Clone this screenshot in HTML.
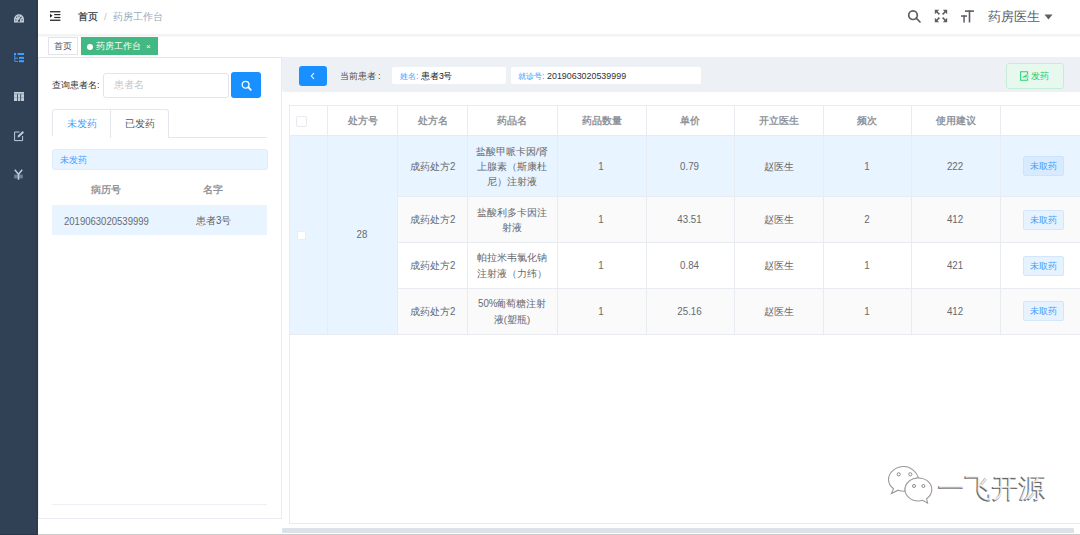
<!DOCTYPE html>
<html><head><meta charset="utf-8">
<style>
*{box-sizing:border-box;margin:0;padding:0}
html,body{width:1080px;height:535px;overflow:hidden;background:#fff;font-family:"Liberation Sans",sans-serif;color:#606266}
.a{position:absolute}
.t{position:absolute;white-space:nowrap;line-height:1}
#side{left:0;top:0;width:38px;height:535px;background:#304156}
#nav{left:38px;top:0;width:1042px;height:34px;background:#fff}
#tags{left:38px;top:34px;width:1042px;height:24px;background:#fff;border-bottom:1px solid #e3e6eb}
.tag{position:absolute;top:37px;height:18px;border:1px solid #e1e4ea;background:#fff;color:#495060;font-size:8.5px;line-height:16px}
.card{position:absolute;border:1px solid #e9ecf2;background:#fff;border-radius:1px}
.cell{position:absolute;display:flex;align-items:center;justify-content:center;text-align:center;font-size:9.6px;line-height:15.2px;color:#66696e}
.th{color:#909399;font-weight:bold}
.vl{position:absolute;width:1px;background:#e8ecf1}
.hl{position:absolute;height:1px;background:#e8ecf1}
.n{font-style:normal;font-size:10.8px;display:inline-block;transform:scaleX(.9)}
.nl{font-style:normal;font-size:10.8px;display:inline-block;transform:scaleX(.9);transform-origin:0 50%}
.btn{position:absolute;left:1023px;width:41px;height:20px;border:1px solid #d3e7fc;background:#e6f2fe;color:#409eff;border-radius:2px;font-size:8.6px;line-height:18px;text-align:center}
</style></head><body>

<!-- sidebar -->
<div id="side" class="a">
  <!-- dashboard -->
  <svg class="a" style="left:13px;top:12px" width="12" height="12" viewBox="0 0 12 12">
    <path d="M1 10.6 V7.2 A5 5 0 0 1 11 7.2 V10.6 Z" fill="#bfcbd9"/>
    <circle cx="6" cy="8.8" r="1.1" fill="#304156"/>
    <path d="M6 8.8 L7.9 5" stroke="#304156" stroke-width=".9"/>
    <circle cx="2.9" cy="8" r=".65" fill="#304156"/><circle cx="9.1" cy="8" r=".65" fill="#304156"/>
    <circle cx="3.8" cy="5.2" r=".65" fill="#304156"/><circle cx="6" cy="4.2" r=".6" fill="#304156"/><circle cx="8.3" cy="5.2" r=".5" fill="#304156"/>
  </svg>
  <!-- tree/list (active) -->
  <svg class="a" style="left:13px;top:52px" width="12" height="11" viewBox="0 0 12 11">
    <rect x="1" y="1" width="2" height="2" fill="#409eff"/>
    <path d="M1.8 3 V9.4 H5" stroke="#409eff" stroke-width=".9" fill="none"/>
    <path d="M1.8 6.2 H5" stroke="#409eff" stroke-width=".9"/>
    <rect x="4.5" y="1" width="6.5" height="2" fill="#409eff"/>
    <rect x="6" y="4.9" width="5" height="2" fill="#409eff"/>
    <rect x="6" y="8.2" width="5" height="2" fill="#409eff"/>
  </svg>
  <!-- table -->
  <svg class="a" style="left:13px;top:91px" width="12" height="11" viewBox="0 0 12 11">
    <rect x="1" y="1" width="10" height="9" fill="#bfcbd9"/>
    <rect x="1" y="2.6" width="10" height=".6" fill="#304156" opacity=".5"/>
    <rect x="4" y="3" width=".8" height="7" fill="#304156"/>
    <rect x="7.3" y="3" width=".8" height="7" fill="#304156"/>
    <rect x="1" y="6.2" width="10" height=".5" fill="#304156" opacity=".4"/>
  </svg>
  <!-- edit -->
  <svg class="a" style="left:13px;top:129px" width="12" height="13" viewBox="0 0 12 13">
    <path d="M6.5 3 H1.6 V11.6 H9.6 V7" stroke="#bfcbd9" stroke-width="1" fill="none"/>
    <path d="M4.6 8.6 L5 6.6 L9.6 2 L11 3.4 L6.4 8 Z" fill="#bfcbd9"/>
  </svg>
  <!-- yen -->
  <svg class="a" style="left:13px;top:168px" width="12" height="13" viewBox="0 0 12 13">
    <rect x="1.2" y="6.6" width="8.6" height="3.8" fill="#bfcbd9" opacity=".45"/>
    <path d="M1.8 1.8 L5.5 6.3 L9.2 1.8" stroke="#bfcbd9" stroke-width="1.5" fill="none"/>
    <path d="M5.5 6.3 V11.8" stroke="#bfcbd9" stroke-width="1.5"/>
  </svg>
</div>

<!-- navbar -->
<div id="nav" class="a"></div>
<svg class="a" style="left:49px;top:10px" width="13" height="12" viewBox="0 0 13 12">
  <rect x="1" y="1.1" width="10.4" height="1.3" fill="#262626"/>
  <rect x="5.2" y="4" width="6.2" height="1.2" fill="#262626"/>
  <rect x="5.2" y="6.9" width="6.2" height="1.2" fill="#262626"/>
  <rect x="1" y="9.6" width="10.4" height="1.3" fill="#262626"/>
  <path d="M1 3.8 L3.6 5.8 L1 7.8 Z" fill="#262626"/>
</svg>
<div class="t" style="left:78px;top:11.7px;font-size:9.7px;color:#303133;font-weight:normal;-webkit-text-stroke:.2px #303133">首页</div>
<div class="t" style="left:104px;top:11.7px;font-size:9.7px;color:#c0c4cc">/</div>
<div class="t" style="left:113px;top:11.7px;font-size:9.7px;color:#97a8be">药房工作台</div>

<svg class="a" style="left:906px;top:8px" width="16" height="16" viewBox="0 0 16 16">
  <circle cx="7" cy="7.2" r="4.3" stroke="#5a5e66" stroke-width="1.7" fill="none"/>
  <path d="M10.2 10.2 L14 14" stroke="#5a5e66" stroke-width="1.7" stroke-linecap="round"/>
</svg>
<svg class="a" style="left:933px;top:8px" width="16" height="16" viewBox="0 0 16 16">
  <g stroke="#5a5e66" stroke-width="1.6" fill="none">
    <path d="M3 3 L6.4 6.4"/><path d="M13 3 L9.6 6.4"/><path d="M3 13 L6.4 9.6"/><path d="M13 13 L9.6 9.6"/>
  </g>
  <g fill="#5a5e66">
    <path d="M1.8 1.8 H6.2 L1.8 6.2 Z"/><path d="M14.2 1.8 H9.8 L14.2 6.2 Z"/><path d="M1.8 14.2 H6.2 L1.8 9.8 Z"/><path d="M14.2 14.2 H9.8 L14.2 9.8 Z"/>
  </g>
</svg>
<svg class="a" style="left:960px;top:8px" width="16" height="16" viewBox="0 0 16 16">
  <g fill="#5a5e66">
    <rect x="5" y="2.3" width="9" height="1.6"/><rect x="8.7" y="2.3" width="1.6" height="12.2"/>
    <rect x="1" y="7.3" width="6" height="1.5"/><rect x="3.3" y="7.3" width="1.5" height="7.2"/>
  </g>
</svg>
<div class="t" style="left:988px;top:10.5px;font-size:12.8px;color:#5a5e66">药房医生</div>
<svg class="a" style="left:1044px;top:14px" width="9" height="6" viewBox="0 0 9 6"><path d="M0.5 0.5 H8.5 L4.5 5.5 Z" fill="#5a5e66"/></svg>

<!-- tags view -->
<div id="tags" class="a"></div>
<div class="a" style="left:38px;top:34px;width:1042px;height:2.5px;background:linear-gradient(#f5f6f6,#f1f3f3 50%,#fbfbfb)"></div>
<div class="tag" style="left:48px;width:30px;text-align:center">首页</div>
<div class="tag" style="left:81px;width:77px;background:#42b983;border-color:#42b983;color:#fff;padding-left:5px">
  <span style="display:inline-block;width:6px;height:6px;border-radius:50%;background:#fff;vertical-align:-0.5px;margin-right:3px"></span>药房工作台<span style="font-size:8px;margin-left:5px">×</span>
</div>


<!-- LEFT CARD -->
<div class="card" style="left:38px;top:57px;width:244px;height:462px;border-radius:0 2px 1px 0;border-top-color:#e3e6eb"></div>
<div class="t" style="left:52px;top:81px;font-size:8.9px;color:#303133;font-weight:500">查询患者名:</div>
<div class="a" style="left:103px;top:72.5px;width:126px;height:25.5px;border:1px solid #e2e5ea;border-radius:3px;background:#fff"></div>
<div class="t" style="left:114px;top:80px;font-size:9.66px;color:#c0c4cc">患者名</div>
<div class="a" style="left:231px;top:72px;width:30px;height:26px;background:#1890ff;border-radius:3px"></div>
<svg class="a" style="left:240px;top:79px" width="13" height="13" viewBox="0 0 13 13">
  <circle cx="5.6" cy="5.7" r="3.4" stroke="#fff" stroke-width="1.3" fill="none"/>
  <path d="M8.2 8.2 L10.8 10.8" stroke="#fff" stroke-width="1.8" stroke-linecap="round"/>
</svg>
<!-- tabs -->
<div class="hl" style="left:52px;top:137px;width:215px;background:#e4e7ed"></div>
<div class="a" style="left:52px;top:109px;width:117px;height:29px;border:1px solid #e4e7ed;border-bottom:none;border-radius:3px 3px 0 0;background:#fff"></div>
<div class="vl" style="left:110px;top:109px;height:29px;background:#e4e7ed"></div>
<div class="a" style="left:52px;top:136px;width:58px;height:2px;background:#fff"></div>
<div class="t" style="left:67px;top:119px;font-size:9.66px;color:#409eff">未发药</div>
<div class="t" style="left:125px;top:119px;font-size:9.66px;color:#55575c">已发药</div>
<!-- alert -->
<div class="a" style="left:52px;top:149px;width:216px;height:21px;background:#e8f4ff;border:1px solid #deedfc;border-radius:3px"></div>
<div class="t" style="left:59.5px;top:156px;font-size:8.6px;color:#409eff">未发药</div>
<!-- list table -->
<div class="t" style="left:91px;top:185px;font-size:9.66px;color:#909399;font-weight:bold">病历号</div>
<div class="t" style="left:203px;top:185px;font-size:9.66px;color:#909399;font-weight:bold">名字</div>
<div class="a" style="left:52px;top:205px;width:215px;height:30px;background:#e8f4ff"></div>
<div class="t" style="left:64px;top:212px;color:#696c71"><i class="nl" style="font-size:10.6px">2019063020539999</i></div>
<div class="t" style="left:196px;top:215px;font-size:9.66px;color:#606266">患者<i class="nl" style="margin-right:-.9px">3</i>号</div>
<div class="hl" style="left:52px;top:504px;width:215px;background:#edf0f4"></div>

<!-- RIGHT PANEL -->
<div class="a" style="left:282px;top:57px;width:798px;height:35px;background:#edf0f5;border-radius:0 0 0 3px"></div>
<div class="a" style="left:299px;top:66px;width:28px;height:20px;background:#1890ff;border-radius:3px"></div>
<svg class="a" style="left:309px;top:72px" width="8" height="8" viewBox="0 0 8 8"><path d="M5 1 L2.4 4 L5 7" stroke="#fff" stroke-width="1.1" fill="none"/></svg>
<div class="t" style="left:340px;top:71px;font-size:9.4px;color:#4a4c50">当前患者<span style="margin-left:2px">:</span></div>
<div class="a" style="left:392px;top:67px;width:114px;height:17px;background:#fff;border-radius:2px"></div>
<div class="t" style="left:400px;top:71px;font-size:8.3px;color:#409eff">姓名: <span style="color:#1a1a1a;font-size:8.7px">患者<i class="nl" style="font-size:9.6px;margin-right:-.8px">3</i>号</span></div>
<div class="a" style="left:511px;top:67px;width:190px;height:17px;background:#fff;border-radius:2px"></div>
<div class="t" style="left:518px;top:71px;font-size:8.3px;color:#409eff">就诊号: <i class="nl" style="color:#303133;font-size:9.9px">2019063020539999</i></div>
<div class="a" style="left:1006px;top:63px;width:58px;height:26px;background:#e7f9ef;border:1px solid #c2efd6;border-radius:3px"></div>
<svg class="a" style="left:1019px;top:70px" width="12" height="12" viewBox="0 0 12 12">
  <path d="M8.6 4.2 V1.8 H1.6 V10.3 H8.6 V8.6" stroke="#2fd37a" stroke-width="1.1" fill="none"/>
  <circle cx="7.6" cy="6.4" r="2.3" fill="#13ce66" opacity=".35"/>
  <path d="M3.6 7.4 L7.8 5.6" stroke="#13ce66" stroke-width="1" fill="none"/>
</svg>
<div class="t" style="left:1030.5px;top:72px;font-size:9.1px;color:#13ce66">发药</div>

<!-- table backgrounds -->
<div class="a" style="left:289px;top:136px;width:791px;height:61px;background:#e8f4ff"></div>
<div class="a" style="left:289px;top:197px;width:109px;height:137px;background:#e8f4ff"></div>
<div class="a" style="left:398px;top:197px;width:682px;height:46px;background:#fafafa"></div>
<div class="a" style="left:398px;top:288px;width:682px;height:46px;background:#fafafa"></div>
<!-- outer border -->
<div class="a" style="left:289px;top:105px;width:800px;height:419px;border:1px solid #e8ecf1"></div>
<!-- horizontal lines -->
<div class="hl" style="left:289px;top:135px;width:791px"></div>
<div class="hl" style="left:398px;top:196px;width:682px"></div>
<div class="hl" style="left:398px;top:242px;width:682px"></div>
<div class="hl" style="left:398px;top:288px;width:682px"></div>
<div class="hl" style="left:289px;top:334px;width:791px"></div>
<!-- vertical lines -->
<div class="vl" style="left:327px;top:105px;height:229px"></div>
<div class="vl" style="left:397px;top:105px;height:229px"></div>
<div class="vl" style="left:467px;top:105px;height:229px"></div>
<div class="vl" style="left:557px;top:105px;height:229px"></div>
<div class="vl" style="left:646px;top:105px;height:229px"></div>
<div class="vl" style="left:734px;top:105px;height:229px"></div>
<div class="vl" style="left:823px;top:105px;height:229px"></div>
<div class="vl" style="left:911px;top:105px;height:229px"></div>
<div class="vl" style="left:1000px;top:105px;height:229px"></div>

<!-- header -->
<div class="a" style="left:296px;top:116px;width:11px;height:11px;border:1px solid #e6e9ee;border-radius:2px;background:#fff"></div>
<div class="cell th" style="left:327px;top:105px;width:71px;height:31px"><div>处方号</div></div>
<div class="cell th" style="left:398px;top:105px;width:69px;height:31px"><div>处方名</div></div>
<div class="cell th" style="left:467px;top:105px;width:90px;height:31px"><div>药品名</div></div>
<div class="cell th" style="left:557px;top:105px;width:89px;height:31px"><div>药品数量</div></div>
<div class="cell th" style="left:646px;top:105px;width:88px;height:31px"><div>单价</div></div>
<div class="cell th" style="left:734px;top:105px;width:89px;height:31px"><div>开立医生</div></div>
<div class="cell th" style="left:823px;top:105px;width:88px;height:31px"><div>频次</div></div>
<div class="cell th" style="left:911px;top:105px;width:89px;height:31px"><div>使用建议</div></div>

<!-- merged -->
<div class="a" style="left:297px;top:231px;width:9px;height:9px;border:1px solid #e6eef8;border-radius:1px;background:#fff"></div>
<div class="cell" style="left:327px;top:136px;width:71px;height:198px"><div><i class="n">28</i></div></div>

<!-- row1 -->
<div class="cell" style="left:398px;top:136px;width:69px;height:61px"><div>成药处方<i class="nl" style="margin-right:-.9px">2</i></div></div>
<div class="cell" style="left:467px;top:136px;width:90px;height:61px;padding:0 8px"><div>盐酸甲哌卡因/肾<br>上腺素（斯康杜<br>尼）注射液</div></div>
<div class="cell" style="left:557px;top:136px;width:89px;height:61px"><div><i class="n">1</i></div></div>
<div class="cell" style="left:646px;top:136px;width:88px;height:61px"><div><i class="n">0.79</i></div></div>
<div class="cell" style="left:734px;top:136px;width:89px;height:61px"><div>赵医生</div></div>
<div class="cell" style="left:823px;top:136px;width:88px;height:61px"><div><i class="n">1</i></div></div>
<div class="cell" style="left:911px;top:136px;width:89px;height:61px"><div><i class="n">222</i></div></div>
<div class="btn" style="top:156px;background:#d8eafd;border-color:#cde4fc">未取药</div>
<!-- row2 -->
<div class="cell" style="left:398px;top:197px;width:69px;height:46px"><div>成药处方<i class="nl" style="margin-right:-.9px">2</i></div></div>
<div class="cell" style="left:467px;top:197px;width:90px;height:46px"><div>盐酸利多卡因注<br>射液</div></div>
<div class="cell" style="left:557px;top:197px;width:89px;height:46px"><div><i class="n">1</i></div></div>
<div class="cell" style="left:646px;top:197px;width:88px;height:46px"><div><i class="n">43.51</i></div></div>
<div class="cell" style="left:734px;top:197px;width:89px;height:46px"><div>赵医生</div></div>
<div class="cell" style="left:823px;top:197px;width:88px;height:46px"><div><i class="n">2</i></div></div>
<div class="cell" style="left:911px;top:197px;width:89px;height:46px"><div><i class="n">412</i></div></div>
<div class="btn" style="top:210px">未取药</div>
<!-- row3 -->
<div class="cell" style="left:398px;top:243px;width:69px;height:45px"><div>成药处方<i class="nl" style="margin-right:-.9px">2</i></div></div>
<div class="cell" style="left:467px;top:243px;width:90px;height:45px"><div>帕拉米韦氯化钠<br>注射液（力纬）</div></div>
<div class="cell" style="left:557px;top:243px;width:89px;height:45px"><div><i class="n">1</i></div></div>
<div class="cell" style="left:646px;top:243px;width:88px;height:45px"><div><i class="n">0.84</i></div></div>
<div class="cell" style="left:734px;top:243px;width:89px;height:45px"><div>赵医生</div></div>
<div class="cell" style="left:823px;top:243px;width:88px;height:45px"><div><i class="n">1</i></div></div>
<div class="cell" style="left:911px;top:243px;width:89px;height:45px"><div><i class="n">421</i></div></div>
<div class="btn" style="top:256px">未取药</div>
<!-- row4 -->
<div class="cell" style="left:398px;top:289px;width:69px;height:45px"><div>成药处方<i class="nl" style="margin-right:-.9px">2</i></div></div>
<div class="cell" style="left:467px;top:289px;width:90px;height:45px"><div><i class="nl" style="margin-right:-3px">50%</i>葡萄糖注射<br>液(塑瓶)</div></div>
<div class="cell" style="left:557px;top:289px;width:89px;height:45px"><div><i class="n">1</i></div></div>
<div class="cell" style="left:646px;top:289px;width:88px;height:45px"><div><i class="n">25.16</i></div></div>
<div class="cell" style="left:734px;top:289px;width:89px;height:45px"><div>赵医生</div></div>
<div class="cell" style="left:823px;top:289px;width:88px;height:45px"><div><i class="n">1</i></div></div>
<div class="cell" style="left:911px;top:289px;width:89px;height:45px"><div><i class="n">412</i></div></div>
<div class="btn" style="top:301px">未取药</div>

<!-- watermark -->
<svg class="a" style="left:886.5px;top:464px" width="50" height="42" viewBox="0 0 50 42">
  <g fill="#fff" stroke="#9a9a9a" stroke-width="1.1">
    <path d="M17 2.5 C8.5 2.5 1.5 8.5 1.5 15.5 C1.5 19.5 3.5 22.5 6.5 24.8 L4.5 29.5 L11 26.2 C13 26.9 15 27.2 17 27.2 C17.3 27.2 17.6 27.2 18 27.2 C17.6 20 23.5 14 31.6 14 C29.5 7.5 23.5 2.5 17 2.5 Z"/>
    <path d="M31.5 14 C24 14 18 19.3 18 25.5 C18 31.7 24 37 31.5 37 C33 37 34.5 36.8 35.8 36.3 L40.6 39.2 L39.6 34.8 C42.6 32.7 44.8 29.3 44.8 25.5 C44.8 19.3 39 14 31.5 14 Z"/>
  </g>
  <g fill="#fff" stroke="#8c8c8c" stroke-width="1"><circle cx="11.7" cy="10.3" r="1.6"/><circle cx="23.3" cy="10.3" r="1.6"/><circle cx="27" cy="22" r="1.5"/><circle cx="36.4" cy="22" r="1.5"/></g>
</svg>
<div class="t" style="left:937px;top:475.5px;font-size:26.5px;color:#666;-webkit-text-stroke:.3px #666">一飞开源</div>
<div class="t" style="left:938.2px;top:474.8px;font-size:26.5px;color:rgba(255,255,255,.85)">一飞开源</div>

<!-- scrollbar + bottom -->
<div class="a" style="left:282px;top:528px;width:792px;height:5px;background:#dde2e9;border-radius:1px"></div>
<div class="a" style="left:38px;top:534px;width:1042px;height:1px;background:#cbcbcb"></div>
<div class="a" style="left:0;top:534px;width:38px;height:1px;background:#28364a"></div>
<div class="a" style="left:36px;top:0;width:2px;height:535px;background:#2d3b4f"></div>

</body></html>
